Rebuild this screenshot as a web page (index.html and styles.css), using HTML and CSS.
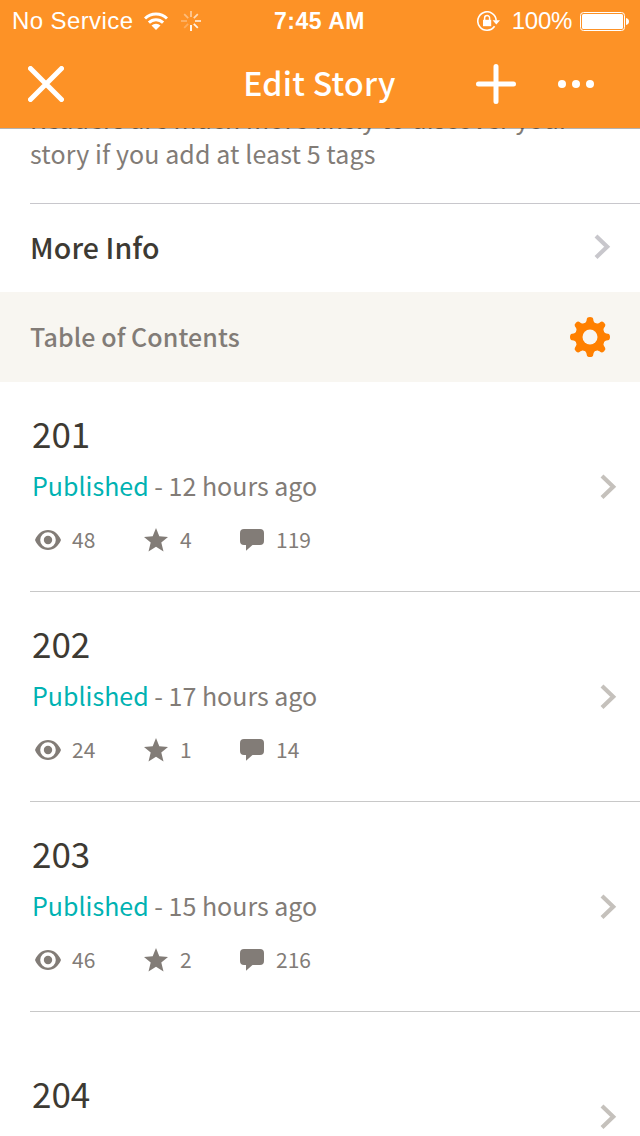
FILE: index.html
```html
<!DOCTYPE html>
<html lang="en">
<head>
  <meta charset="UTF-8">
  <meta name="viewport" content="width=device-width, initial-scale=1">
  <title>Edit Story</title>
  <link rel="stylesheet" href="styles.css">
</head>
<body>
  <!-- Shared icons -->
  <svg class="sprite" width="0" height="0">
    <symbol id="chevron" viewBox="0 0 18 26">
      <path d="M3 2L14.200 12.700L3 23.400" fill="none" stroke="currentColor" stroke-width="4.200"/>
    </symbol>
    <symbol id="eye" viewBox="0 0 26 20">
      <path fill-rule="evenodd" d="M0 10C2.500 4 7 0 13 0s10.500 4 13 10c-2.500 6-7 10-13 10S2.500 16 0 10zM13 2.200a7.800 7.800 0 1 0 0 15.600a7.800 7.800 0 1 0 0-15.600z" fill="currentColor"/>
      <circle cx="13" cy="10" r="4.200" fill="currentColor"/>
    </symbol>
    <symbol id="star" viewBox="0 0 24 24">
      <path d="M12 0l3.300 8.300 8.700.600-6.700 5.700 2.200 8.900L12 18.700l-7.500 4.800 2.200-8.900L0 8.900l8.700-.600z" fill="currentColor"/>
    </symbol>
    <symbol id="comment" viewBox="0 0 24 22">
      <path d="M4 0h16a4 4 0 0 1 4 4v8a4 4 0 0 1-4 4h-7.500L6 21.800V16H4a4 4 0 0 1-4-4V4a4 4 0 0 1 4-4z" fill="currentColor"/>
    </symbol>
  </svg>

  <header class="header">
    <div class="status-bar">
      <div class="status-left">
        <span>No Service</span>
        <svg class="wifi" width="24" height="18" viewBox="0 0 24 18">
          <g fill="none" stroke="#fff" stroke-width="3">
            <path d="M1 6.500A15.600 15.600 0 0 1 23 6.500"/>
            <path d="M4.900 10.600A10 10 0 0 1 19.100 10.600"/>
          </g>
          <path d="M12 18L7.500 13.600A6.300 6.300 0 0 1 16.500 13.600z" fill="#fff"/>
        </svg>
        <svg class="spinner" width="20" height="20" viewBox="-10 -10 20 20">
          <g stroke="#fff" stroke-width="1.800">
            <path d="M0 4V10"/>
            <path d="M-2.800 2.800L-6.800 6.800" opacity=".25"/>
            <path d="M-4 0H-10" opacity=".3"/>
            <path d="M-2.800-2.800L-6.800-6.800" opacity=".4"/>
            <path d="M0-4V-10" opacity=".5"/>
            <path d="M2.800-2.800L6.800-6.800" opacity=".65"/>
            <path d="M4 0H10" opacity=".75"/>
            <path d="M2.800 2.800L6.800 6.800" opacity=".9"/>
          </g>
        </svg>
      </div>
      <div class="time">7:45 AM</div>
      <div class="status-right">
        <svg class="lock" width="23" height="20" viewBox="0 0 23 20">
          <path d="M17.600 15.200A9.200 9.200 0 1 1 19.200 9.500" fill="none" stroke="#fff" stroke-width="1.600"/>
          <path d="M15.600 9.200h7.400l-3.700 4.300z" fill="#fff"/>
          <path d="M6 8.800h8.200v6.400H6z" fill="#fff"/>
          <path d="M7.600 9V7a2.500 2.500 0 0 1 5 0v2" fill="none" stroke="#fff" stroke-width="1.500"/>
        </svg>
        <span class="percent">100%</span>
        <svg width="49" height="19" viewBox="0 0 49 19">
          <rect x=".5" y=".5" width="44" height="18" rx="3" fill="none" stroke="#fff"/>
          <rect x="2" y="2" width="41" height="15" rx="1.500" fill="#fff"/>
          <path d="M46 6c4 .500 4 6.500 0 7z" fill="#fff"/>
        </svg>
      </div>
    </div>
    <div class="nav-bar">
      <svg class="close" width="36" height="36" viewBox="0 0 36 36">
        <path d="M2.500 2.500L33.500 33.500M33.500 2.500L2.500 33.500" stroke="#fff" stroke-width="5" stroke-linecap="round"/>
      </svg>
      <h1>Edit Story</h1>
      <div class="actions">
        <svg width="40" height="40" viewBox="0 0 40 40">
          <path d="M20 2.500V37.500M2.500 20H37.500" stroke="#fff" stroke-width="5" stroke-linecap="round"/>
        </svg>
        <svg width="36" height="8" viewBox="0 0 36 8">
          <g fill="#fff"><circle cx="4" cy="4" r="4"/><circle cx="18" cy="4" r="4"/><circle cx="32" cy="4" r="4"/></g>
        </svg>
      </div>
    </div>
  </header>

  <main>
    <p class="hint">Readers are much more likely to discover your<br>story if you add at least 5 tags</p>

    <div class="more-info">
      <span>More Info</span>
      <svg class="chevron" width="18" height="26"><use href="#chevron"/></svg>
    </div>

    <div class="section-title">
      <span>Table of Contents</span>
      <svg width="40" height="40" viewBox="-20 -20 40 40">
        <defs>
          <path id="tooth" d="M-6.500-13C-4-14.500-3.500-15.500-3.200-18Q-3-20 0-20T3.200-18C3.500-15.500 4-14.500 6.500-13z"/>
        </defs>
        <g fill="#ff8000">
          <circle r="14.800"/>
          <use href="#tooth"/>
          <use href="#tooth" transform="rotate(45)"/>
          <use href="#tooth" transform="rotate(90)"/>
          <use href="#tooth" transform="rotate(135)"/>
          <use href="#tooth" transform="rotate(180)"/>
          <use href="#tooth" transform="rotate(225)"/>
          <use href="#tooth" transform="rotate(270)"/>
          <use href="#tooth" transform="rotate(315)"/>
        </g>
        <circle r="7.500" fill="#f8f6f1"/>
      </svg>
    </div>

    <div class="chapter">
      <div class="info">
        <h2>201</h2>
        <div class="date"><span class="published">Published</span> - 12 hours ago</div>
        <div class="stats">
          <span class="views"><svg width="26" height="20"><use href="#eye"/></svg>48</span>
          <span class="votes"><svg width="24" height="24"><use href="#star"/></svg>4</span>
          <span class="comments"><svg width="24" height="22"><use href="#comment"/></svg>119</span>
        </div>
      </div>
      <svg class="chevron" width="18" height="26"><use href="#chevron"/></svg>
    </div>

    <div class="chapter">
      <div class="info">
        <h2>202</h2>
        <div class="date"><span class="published">Published</span> - 17 hours ago</div>
        <div class="stats">
          <span class="views"><svg width="26" height="20"><use href="#eye"/></svg>24</span>
          <span class="votes"><svg width="24" height="24"><use href="#star"/></svg>1</span>
          <span class="comments"><svg width="24" height="22"><use href="#comment"/></svg>14</span>
        </div>
      </div>
      <svg class="chevron" width="18" height="26"><use href="#chevron"/></svg>
    </div>

    <div class="chapter">
      <div class="info">
        <h2>203</h2>
        <div class="date"><span class="published">Published</span> - 15 hours ago</div>
        <div class="stats">
          <span class="views"><svg width="26" height="20"><use href="#eye"/></svg>46</span>
          <span class="votes"><svg width="24" height="24"><use href="#star"/></svg>2</span>
          <span class="comments"><svg width="24" height="22"><use href="#comment"/></svg>216</span>
        </div>
      </div>
      <svg class="chevron" width="18" height="26"><use href="#chevron"/></svg>
    </div>

    <!-- Drafts have no stats -->
    <div class="chapter">
      <div class="info">
        <h2>204</h2>
        <div class="date draft">Draft</div>
      </div>
      <svg class="chevron" width="18" height="26"><use href="#chevron"/></svg>
    </div>
  </main>
</body>
</html>
```
FILE: styles.css
```css
* {
  box-sizing: border-box;
}

body {
  margin: 0;
  background: #fff;
  color: #3d3a33;
  font-family: "Noto Sans CJK SC", "Open Sans", sans-serif;
}

main {
  height: 1136px;
  overflow: hidden;
}

svg {
  display: block;
  flex: none;
}

.sprite {
  position: absolute;
}

/* Header */
.header {
  position: fixed;
  top: 0;
  left: 0;
  width: 100%;
  height: 129px;
  background: #fd9226;
  background-clip: padding-box;
  border-bottom: 1px solid rgba(0, 0, 0, 0.3);
  color: #fff;
}

.status-bar {
  display: grid;
  grid-template-columns: 1fr auto 1fr;
  align-items: center;
  height: 40px;
  padding: 1px 11px 0 12px;
  font-family: "Liberation Sans", Arial, sans-serif;
  font-size: 24px;
  line-height: 40px;
}

.status-left,
.status-right {
  display: flex;
  align-items: center;
  letter-spacing: 0.4px;
}

.status-right {
  justify-content: flex-end;
}

.wifi {
  margin-left: 11px;
}

.spinner {
  margin-left: 13px;
}

.time {
  margin-left: -2px;
  font-size: 23px;
  font-weight: bold;
  letter-spacing: 0.5px;
}

.percent {
  margin: 0 8px 0 12px;
  letter-spacing: -0.3px;
}

.nav-bar {
  display: grid;
  grid-template-columns: 1fr auto 1fr;
  align-items: center;
  height: 88px;
  padding: 0 46px 0 45px;
}

.close {
  margin-left: -17px;
}

h1 {
  margin: 0;
  padding-bottom: 4px;
  font-size: 32px;
  font-weight: 500;
  line-height: 84px;
  letter-spacing: 0.3px;
}

.actions {
  display: flex;
  align-items: center;
  justify-content: flex-end;
  gap: 42px;
}

/* Tags hint, scrolled under the header */
.hint {
  margin: 0;
  padding: 101px 0 0 30px;
  height: 203px;
  color: #827c77;
  font-size: 25px;
  line-height: 35px;
  letter-spacing: 0.1px;
}

.more-info,
.section-title {
  display: flex;
  align-items: center;
  justify-content: space-between;
}

.more-info {
  height: 89px;
  margin-left: 30px;
  padding: 0 29px 2px 0;
  border-top: 1px solid #c8c7cc;
  font-size: 28.5px;
  font-weight: 500;
  letter-spacing: 0.1px;
}

.more-info span {
  padding-bottom: 2px;
}

.section-title {
  height: 90px;
  padding: 0 30px;
  background: #f8f6f1;
  color: #827c77;
  font-size: 25px;
  font-weight: 500;
  letter-spacing: 0.1px;
}

.section-title span {
  padding-bottom: 2px;
}

.chevron {
  color: #c8c7cc;
}

/* Chapters */
.chapter {
  display: flex;
  align-items: center;
  justify-content: space-between;
  height: 210px;
  margin-left: 30px;
  padding: 0 23px 0 2px;
  border-bottom: 1px solid #c8c8c8;
  color: #827c77;
}

.chapter .chevron {
  color: #c5c1bc;
}

h2 {
  margin: 0;
  padding-bottom: 4px;
  color: #3d3a33;
  font-size: 35px;
  font-weight: 400;
  line-height: 56px;
}

.date {
  padding-bottom: 4px;
  font-size: 25px;
  line-height: 40px;
}

.draft {
  padding: 2px 0;
}

.published {
  color: #00b2b2;
}

.stats {
  display: flex;
  height: 60px;
  padding-left: 3px;
  font-size: 21px;
  line-height: 60px;
}

.stats span {
  display: flex;
  align-items: center;
}

.stats svg {
  margin-top: 2px;
}

.views {
  width: 109px;
  gap: 11px;
}

.votes {
  width: 96px;
  gap: 12px;
}

.comments {
  gap: 12px;
}
```
